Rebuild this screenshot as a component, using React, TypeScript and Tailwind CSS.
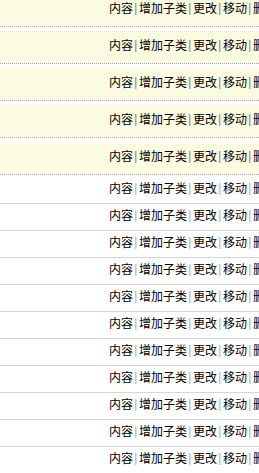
const actions = ["内容", "增加子类", "更改", "移动", "删除"];

function Actions({ sep }: { sep: string }) {
  return (
    <div className="flex items-center whitespace-nowrap text-[12px] leading-[12px] text-black">
      {actions.map((a, i) => (
        <span key={a} className="flex items-center">
          {i > 0 && (
            <span
              className={`inline-block w-[6px] pl-[1px] font-['Liberation_Sans',sans-serif] text-[13px] leading-[12px] ${sep}`}
            >
              |
            </span>
          )}
          <a href="#" className="text-black no-underline">
            {a}
          </a>
        </span>
      ))}
    </div>
  );
}

export default function App() {
  return (
    <div className="w-[259px] h-[473px] overflow-hidden bg-white font-['Noto_Sans_CJK_SC','Noto_Sans',sans-serif]">
      {/* 页面已滚动，首行顶部被截掉 */}
      <div className="-mt-[10px]">
        {[0, 1, 2, 3, 4].map((i) => (
          <div key={i} className="mt-[4px] border-b border-dotted border-[#a8a8a8]">
            <div className="flex h-[32px] items-center bg-[#fbfbe2] pb-[4px]">
              <div className="w-[109px] shrink-0" />
              <Actions sep="text-[#8a8a8a]" />
            </div>
          </div>
        ))}
      </div>
      <div className="mt-[2px]">
        {Array.from({ length: 12 }).map((_, i) => (
          <div key={i} className="flex h-[27px] items-center border-b border-[#d6d6d6] pb-[4px]">
            <div className="w-[109px] shrink-0" />
            <Actions sep="text-[#9fb4d4]" />
          </div>
        ))}
      </div>
    </div>
  );
}
